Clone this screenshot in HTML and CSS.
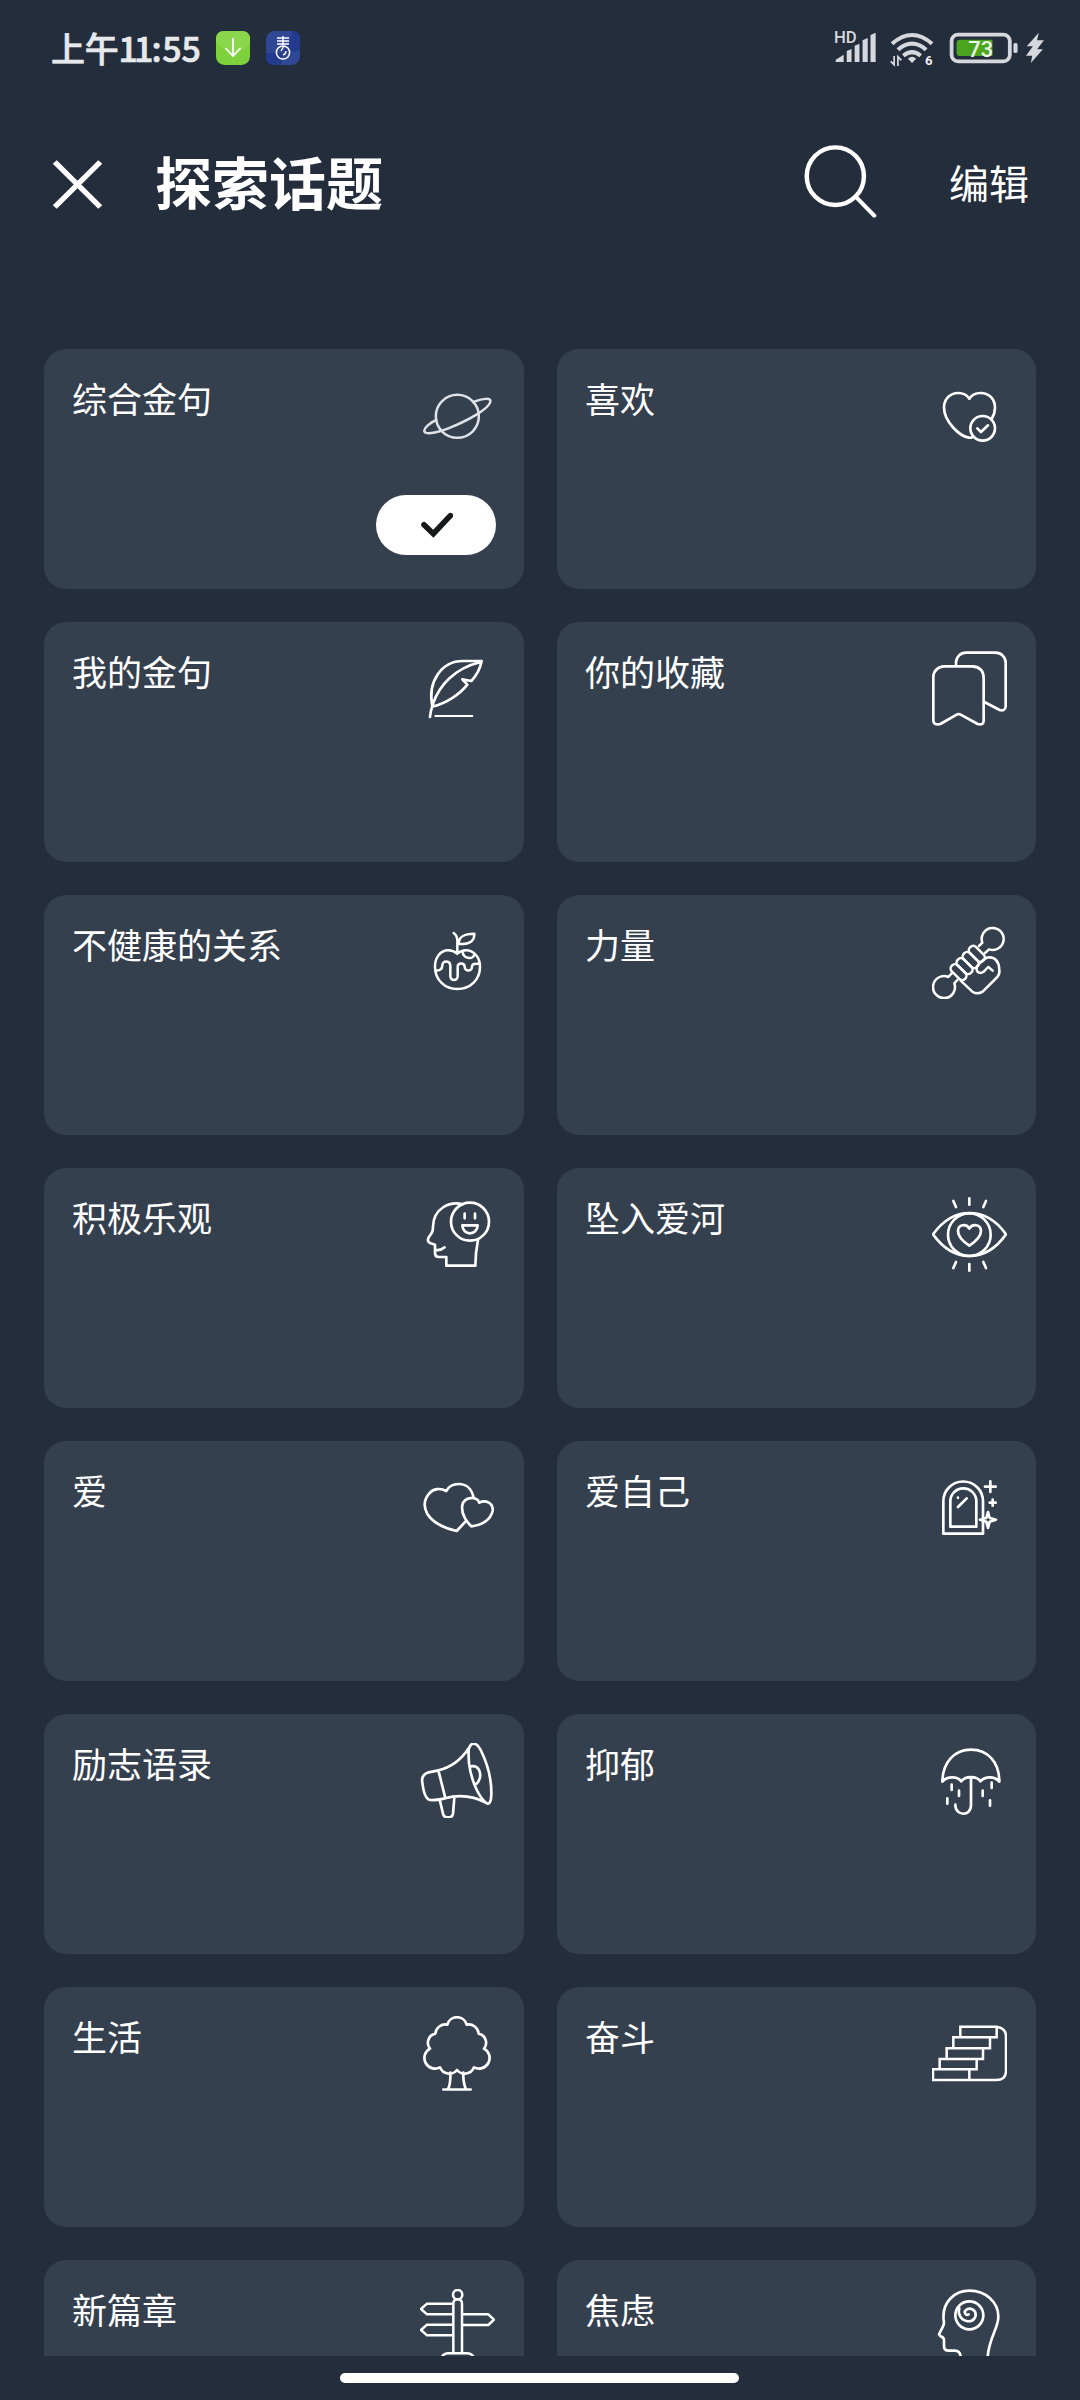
FILE: index.html
```html
<!DOCTYPE html>
<html lang="zh-CN">
<head>
<meta charset="utf-8">
<title>探索话题</title>
<link rel="stylesheet" href="styles.css">
</head>
<body>
<div class="status">
  <div class="status-left">
    <span class="time">上午<span class="ones">11</span><span class="colon">:</span>55</span>
    <svg class="app-icon" viewBox="0 0 34 34"><rect width="34" height="34" rx="8.5" fill="#7dd13b"/><path d="M0 11L17 27L34 13V8Q34 0 26 0H8Q0 0 0 8Z" fill="#8ad64d"/><path d="M17 7V24M9.500 17L17 25L24.500 17" fill="none" stroke="#fff" stroke-width="1.700"/></svg>
    <svg class="app-icon" viewBox="0 0 34 34"><rect width="34" height="34" rx="8.500" fill="#304795"/><path d="M26 0Q34 0 34 8V20H16V34H8Q0 34 0 26V22H16L24 12Z" fill="#233b8e"/><path d="M11 7H23M11 10H23M11 13H23M17 5V14" fill="none" stroke="#fff" stroke-width="1.500"/><circle cx="17" cy="21.500" r="6.600" fill="none" stroke="#fff" stroke-width="1.500"/><path d="M15 20L18 15M17 24Q20 23 20 20" fill="none" stroke="#fff" stroke-width="1.300"/></svg>
  </div>
  <div class="status-right">
    <svg class="signal" preserveAspectRatio="none" viewBox="852 90 122 108" fill="#d6d8de"><text x="852" y="129" font-size="47" font-weight="500" textLength="66" lengthAdjust="spacingAndGlyphs">HD</text><path d="M857 179L880 164V186H857ZM889 153L903 147V186H889ZM912 137L926 131V186H912ZM935 121L950 114V186H935ZM958 105L973 98V186H958Z"/></svg>
    <svg class="wifi" preserveAspectRatio="none" viewBox="1016 90 128 108" fill="none" stroke="#d6d8de" stroke-width="12"><path d="M1022 131Q1080 79 1138 131M1039 149Q1080 113 1121 149M1055 167Q1080 146 1105 167"/><path d="M1068 176Q1080 164 1092 176L1080 189Z" fill="#d6d8de" stroke="none"/><path d="M1028 168V194L1018 184M1039 198V170L1049 181" stroke-width="5"/><text x="1118" y="196" font-size="38" font-weight="700" fill="#eef0f3" stroke="none">6</text></svg>
    <svg class="battery" preserveAspectRatio="none" viewBox="1186 90 202 108"><rect x="1193.500" y="104" width="169" height="80" rx="19" fill="none" stroke="#d6d8de" stroke-width="11"/><path d="M1218 119H1312V168H1218Q1208 168 1208 158V129Q1208 119 1218 119Z" fill="#4ca61d"/><rect x="1373" y="129" width="12" height="30" rx="5" fill="#d6d8de"/><text x="1278" y="170" text-anchor="middle" font-size="67" font-weight="500" textLength="72" lengthAdjust="spacingAndGlyphs" fill="#eef9e8">73</text></svg>
    <svg class="bolt" preserveAspectRatio="none" viewBox="1406 90 56 108" fill="#d6d8de"><path d="M1446 98L1411 139H1429L1409 167H1427L1423 189L1458 148H1441L1461 121H1441Z"/></svg>
  </div>
</div>
<header class="header">
  <svg class="close" preserveAspectRatio="none" viewBox="155 480 140 147"><path d="M160 486L290 621M290 486L160 621" fill="none" stroke="#fff" stroke-width="16"/></svg>
  <h1 class="title">探索话题</h1>
  <svg class="search" preserveAspectRatio="none" viewBox="766 434 212 219"><path d="M916 589L970 646" stroke="#fff" stroke-width="12" stroke-linecap="round"/><ellipse cx="857" cy="527.500" rx="83" ry="86.500" fill="none" stroke="#fff" stroke-width="13"/></svg>
  <span class="edit">编辑</span>
</header>
<main class="topics">
  <section class="card"><h2 class="label">综合金句</h2>
    <svg class="icon planet" viewBox="1170 114 225 225"><circle cx="1282" cy="229" r="64.500"/><path d="M1330 186C1362 174 1385 173 1381 186C1376 205 1320 240 1255 265C1215 280 1182 285 1183 272C1184 262 1200 248 1219 240"/></svg>
    <span class="selected"><svg class="check" viewBox="1166 516 104 78"><path d="M1181 554L1209 581L1260 527"/></svg></span></section>
  <section class="card"><h2 class="label">喜欢</h2>
    <svg class="icon" viewBox="96 54 225 225"><path d="M216 232Q212 234 207 233C180 230 132 185 132 142C132 119 148 99 175 99C188 99 200 104 208 116C216 104 228 99 241 99C270 99 285 120 285 143C285 155 281 167 275 177"/><circle cx="248" cy="205" r="37"/><path d="M232 205L243 216L264 196"/></svg></section>
  <section class="card"><h2 class="label">我的金句</h2>
    <svg class="icon" viewBox="60 93 225 225"><path d="M90 291C91 275 95 264 99 251C117 200 160 145 243 126M97 258C82 185 125 122 190 123H245C240 148 228 168 214 183L187 178L202 194C180 222 140 250 97 260"/><path d="M106 288H217" stroke-width="6"/></svg></section>
  <section class="card"><h2 class="label">你的收藏</h2>
    <svg class="icon" viewBox="96 873 225 225"><path d="M100 1083V951A32 32 0 0 1 132 919H217Q251 921 251 955V1083Q250 1097 233 1092L182 1064Q176 1061 170 1064L121 1092Q102 1097 100 1083ZM168 917V908A30 30 0 0 1 198 878H287A30 30 0 0 1 317 908V1040Q315 1054 299 1050L253 1026"/></svg></section>
  <section class="card"><h2 class="label">不健康的关系</h2>
    <svg class="icon thin" viewBox="60 912 225 225"><path d="M172 1001C160 991 150 990 140 991C118 995 105 1015 105 1040C105 1080 135 1107 172 1107C210 1107 240 1080 240 1040C240 1010 220 991 198 991C188 991 180 994 172 1001V963C172 952 168 944 161 939M176 972C176 950 190 941 223 941C224 960 212 972 190 972H176M107 1051Q126 1054 127 1036C127 1020 151 1020 151 1038V1068C151 1084 173 1084 173 1068V1040C173 1027 194 1027 194 1040C194 1055 216 1055 216 1040C216 1030 228 1031 238 1031M188 994C188 1018 218 1018 222 1006"/></svg></section>
  <section class="card"><h2 class="label">力量</h2>
    <svg class="icon thin" viewBox="96 102 225 225"><path d="M237 168L247 158A33 33 0 1 1 267 178L255 189M155 250L145 261A33 33 0 1 0 163 280L172 270"/><g transform="rotate(45 176 246)"><rect x="148" y="234" width="56" height="25" rx="12"/><rect x="148" y="208" width="56" height="26" rx="12"/><rect x="148" y="182" width="56" height="26" rx="12"/><rect x="148" y="156" width="56" height="26" rx="12"/></g><path d="M182 272L217 305Q232 315 248 305L292 261Q300 252 298 238C297 222 290 203 268 202C255 202 248 212 238 221C225 232 228 248 242 249C255 248 256 236 265 231L278 242"/></svg></section>
  <section class="card"><h2 class="label">积极乐观</h2>
    <svg class="icon" viewBox="60 81 225 225"><circle cx="210" cy="155" r="57"/><path d="M194 131V145M225 131V145M187 166H233C232 198 188 198 187 166ZM188 103C150 92 100 115 99 170C99 187 95 190 86 202Q80 214 90 219L105 224V250Q106 261 116 261H139V287H226C226 260 229 235 234 209M108 240C120 242 127 238 134 232"/></svg></section>
  <section class="card"><h2 class="label">坠入爱河</h2>
    <svg class="icon" viewBox="96 921 225 225"><path d="M99 1033C130 990 168 969 208 969C250 969 288 990 318 1033C288 1076 250 1098 208 1098C168 1098 130 1076 99 1033Z"/><circle cx="208" cy="1034" r="64"/><path d="M208 1067C190 1055 174 1040 174 1023C174 1002 200 1000 208 1016C216 1000 243 1002 243 1023C243 1040 226 1055 208 1067ZM208 925V944M160 933L168 951M258 933L250 951M208 1122V1142M168 1116L160 1134M250 1116L258 1134"/></svg></section>
  <section class="card"><h2 class="label">爱</h2>
    <svg class="icon" viewBox="60 900 225 225"><path d="M221 985C216 955 197 942 176 942C158 942 145 951 139 963C120 953 100 956 88 970C72 988 70 1010 82 1032C100 1060 135 1075 170 1083L199 1052M214 1069C195 1050 183 1030 187 1005C193 980 230 977 238 998C258 988 280 1000 278 1022C272 1050 245 1066 214 1069Z"/></svg></section>
  <section class="card"><h2 class="label">爱自己</h2>
    <svg class="icon" viewBox="96 90 225 225"><path d="M130 281V184A59.500 59.500 0 0 1 249 184V281ZM151 260V184A39 39 0 0 1 229 184V260ZM174 201L200 175M174 173V173.500M255 140H287M271 124V156M269 188H287M278 179V197"/><path d="M264 216L269 234L288 239L269 245L264 264L259 245L240 239L259 234Z" fill="#35404f"/></svg></section>
  <section class="card"><h2 class="label">励志语录</h2>
    <svg class="icon" viewBox="60 69 225 225"><path d="M206 85C185 117 155 142 115 151L86 157C70 162 64 172 67 188C70 215 75 232 85 238C95 243 110 240 135 235C180 222 225 230 262 250M206 88C212 65 230 65 242 90C262 130 275 180 274 225Q273 255 260 250C240 235 215 190 207 130Q205 100 206 88ZM115 151L136 234M213 139C235 135 243 155 240 172Q235 190 226 193M120 243L129 281Q131 292 145 292Q157 292 159 281L163 234"/></svg></section>
  <section class="card"><h2 class="label">抑郁</h2>
    <svg class="icon" viewBox="96 909 225 225"><path d="M127 1025C128 965 165 929 213 929C262 929 298 965 298 1025C285 1008 255 1008 241 1024C232 1008 196 1006 184 1024C172 1008 140 1008 127 1025ZM213 1012V1096C213 1130 166 1130 166 1094M155 1034V1050M177 1052V1068M142 1075V1091M248 1052V1068M275 1028V1044M270 1081V1097"/></svg></section>
  <section class="card"><h2 class="label">生活</h2>
    <svg class="icon" viewBox="60 888 225 225"><path d="M142 914A30 30 0 0 1 200 914A30 30 0 0 1 236 941A28 28 0 0 1 252 986A30 30 0 0 1 222 1042A30 30 0 0 1 171 1050A30 30 0 0 1 120 1042A30 30 0 0 1 90 986A28 28 0 0 1 106 941A30 30 0 0 1 142 914ZM151 1058C152 1080 150 1095 144 1108M190 1058C189 1080 192 1095 198 1108M130 1108.500H212"/></svg></section>
  <section class="card"><h2 class="label">奋斗</h2>
    <svg class="icon stairs" viewBox="96 48 225 225"><path d="M181 80H290V112H181ZM160 112H270V145H160ZM140 145H249V177H140ZM119 177H230V208H119ZM99 208H208V240H99ZM290 80Q318 84 318 110V212Q318 240 290 240H208"/></svg></section>
  <section class="card"><h2 class="label">新篇章</h2>
    <svg class="icon thin" viewBox="360 207 225 225"><circle cx="473" cy="224" r="14"/><path d="M460 399V252Q460 238 473 238Q486 238 486 252V399M458 251H381L363 267L381 283H458M458 314H381L363 330L381 346H458M488 283H565L582 299L565 315H488M425 411Q432 400 445 400H500Q515 400 521 411"/></svg></section>
  <section class="card"><h2 class="label">焦虑</h2>
    <svg class="icon" viewBox="96 867 225 225"><path d="M182 1070Q180 1052 165 1052H146Q132 1052 132 1038V1020Q131 1012 123 1010L117 1003L130 977Q133 970 131 960C125 905 165 872 209 872C255 872 295 905 295 950C295 985 268 1010 263 1070"/><circle cx="208" cy="946" r="42"/><path d="M206 943C197 948 190 937 198 930C210 920 228 930 227 945C226 960 212 966 200 963C182 960 172 940 178 925"/></svg></section>
</main>
<footer class="nav"><div class="home-bar"></div></footer>
</body>
</html>
```
FILE: styles.css
```css
* { box-sizing: border-box; }

body {
  margin: 0;
  width: 1080px;
  height: 2400px;
  display: flex;
  flex-direction: column;
  overflow: hidden;
  background: #242d3b;
  color: #fff;
  font-family: "Noto Sans CJK SC", "Noto Sans", sans-serif;
}

svg { display: block; flex: none; }
svg text { font-family: Roboto, sans-serif; }

.status {
  height: 96px;
  flex: none;
  display: flex;
  justify-content: space-between;
  padding: 30px 36px 0 51px;
}
.status svg { overflow: visible; }
.status-left, .status-right { display: flex; align-items: flex-start; }
.time {
  width: 165px;
  height: 36px;
  font-size: 34px;
  line-height: 36px;
  font-weight: 500;
  letter-spacing: -0.2px;
  color: #e6e8ec;
  -webkit-text-stroke: 0.7px #e6e8ec;
  white-space: nowrap;
}
.ones { letter-spacing: -4px; }
.colon { margin: 0 1px 0 2px; }
.app-icon { width: 34px; height: 34px; margin: 1px 16px 0 0; }
.signal { width: 42px; height: 36px; margin-right: 14.500px; }
.wifi { width: 44.100px; height: 36px; margin-right: 14.400px; }
.battery { width: 69.600px; height: 36px; margin-right: 6.200px; }
.bolt { width: 19.300px; height: 36px; }

.header {
  height: 253px;
  flex: none;
  display: flex;
  align-items: flex-start;
  padding: 0 51px 0 53px;
}
.close { width: 49px; height: 49px; margin-top: 64px; }
.title {
  margin: 44px 0 0 53px;
  font-size: 57px;
  line-height: 80px;
  font-weight: 700;
}
.search { width: 73px; height: 73px; margin: 48.500px 72px 0 auto; }
.edit { margin-top: 57px; font-size: 40px; line-height: 58px; }

.topics {
  flex: 1;
  min-height: 0;
  overflow: hidden;
  display: grid;
  grid-template-columns: 480px 479px;
  grid-auto-rows: 240px;
  gap: 33px;
  padding: 0 44px;
}
.card {
  display: grid;
  grid-template-columns: 1fr 75px;
  align-content: space-between;
  padding: 29px 29px 34px 28px;
  border-radius: 22px;
  background: #35404f;
}
.label {
  margin: -2px 0 0;
  font-size: 35px;
  line-height: 44px;
  font-weight: 400;
}
.icon {
  width: 75px;
  height: 75px;
  fill: none;
  stroke: #fff;
  stroke-width: 8;
  stroke-linecap: round;
  stroke-linejoin: round;
}
.planet { stroke: #dfe2e6; stroke-width: 7.500; }
.thin { stroke-width: 7.500; }
.stairs { stroke-width: 7.500; stroke-linejoin: miter; }
.selected {
  grid-column: 1 / -1;
  justify-self: end;
  width: 120px;
  height: 60px;
  margin-right: -1px;
  border-radius: 30px;
  background: #fff;
  display: flex;
  align-items: center;
  justify-content: center;
}
.check {
  width: 34.700px;
  height: 26px;
  fill: none;
  stroke: #17181b;
  stroke-width: 17;
  stroke-linecap: round;
}

.nav {
  height: 44px;
  flex: none;
  display: flex;
  justify-content: center;
  padding: 17px 1px 0 0;
}
.home-bar { width: 399px; height: 10px; border-radius: 5px; background: #fff; }
```
